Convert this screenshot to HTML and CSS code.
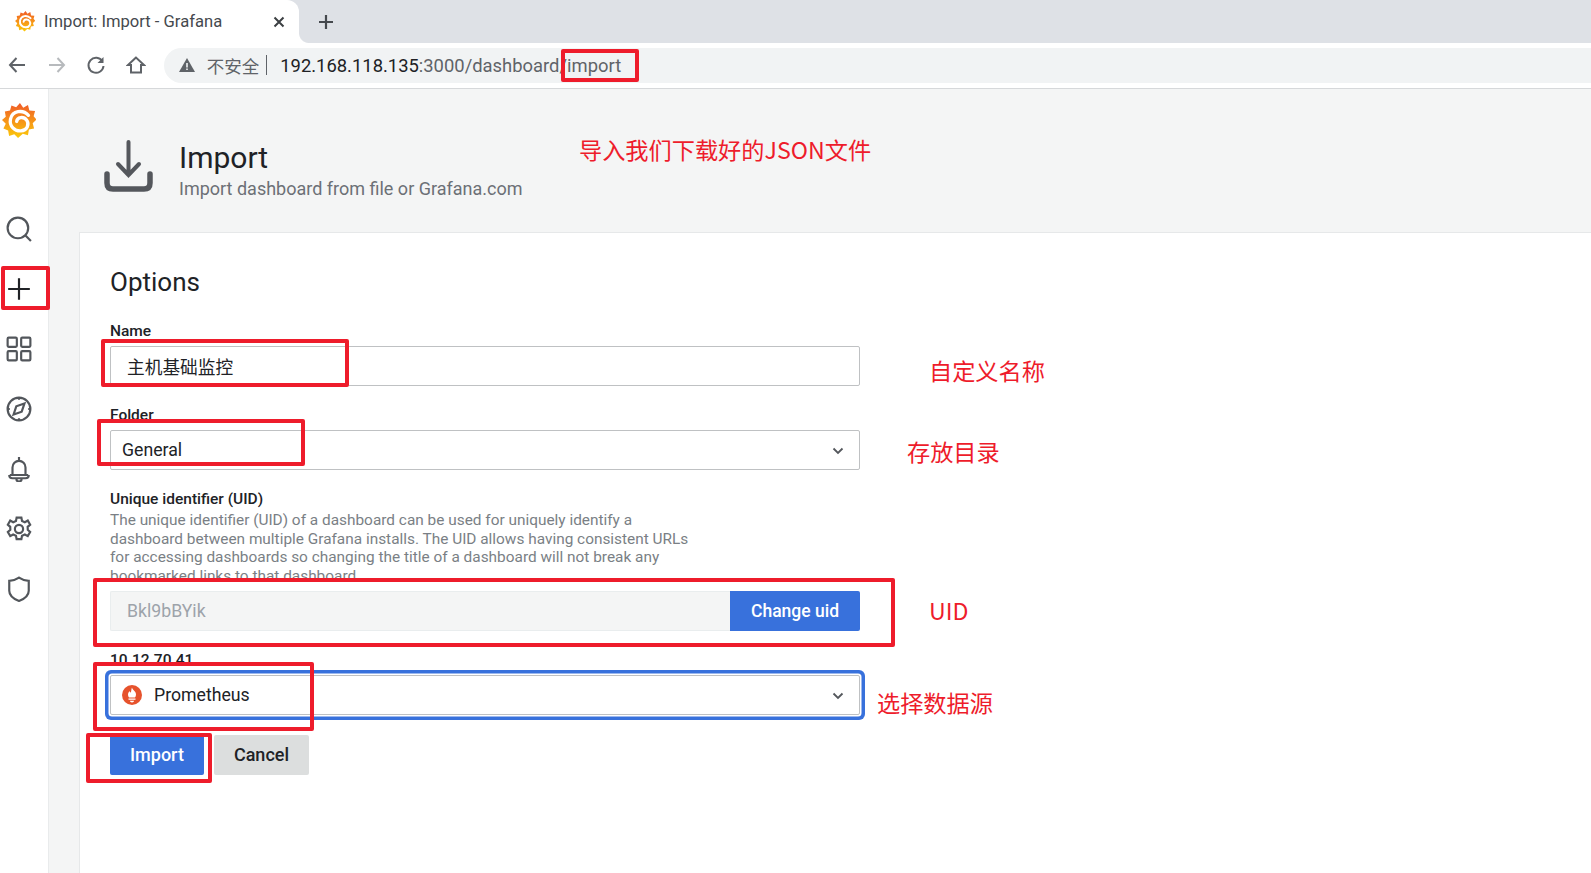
FILE: index.html
```html
<!DOCTYPE html>
<html lang="zh-CN">
<head>
    <meta charset="UTF-8">
    <meta name="viewport" content="width=device-width, initial-scale=1.0">
    <title>Import: Import - Grafana</title>
    <link rel="stylesheet" href="styles.css">
</head>
<body>
    <svg class="defs" width="0" height="0">
        <defs>
            <linearGradient id="grafana-fill" x1="0" y1="0" x2="0" y2="1">
                <stop offset="0" stop-color="#f05a28"/>
                <stop offset="1" stop-color="#fbca0a"/>
            </linearGradient>
            <symbol id="grafana-logo" viewBox="0 0 36 38">
                <path fill="url(#grafana-fill)" d="M19 0l3.500 5 5-3 1.500 6 6 .5-1.500 5.500 3 3.500-4 4 1.500 5.500-5.500 1-1 6-5.500-1.500L17 37l-4-4-5.500 2-1-6-5-2 2.500-5L0 18l4-3.500L3 9l5.500-1L10 2.500l5 2z"/>
                <path fill="none" stroke="#fff" stroke-width="3.500" stroke-linecap="round" d="M28 13C22 6.500 11 8 9 17c-1.500 7.500 4.500 13 11 12.500 6.500-.5 9.500-7 6-11.500-3-4-10-3.500-10.500 1.500"/>
            </symbol>
        </defs>
    </svg>

    <div class="tabstrip">
        <div class="tab">
            <svg class="favicon"><use href="#grafana-logo"/></svg>
            <span class="tab-title">Import: Import - Grafana</span>
            <svg class="tab-close" viewBox="0 0 12 12"><path d="M1.500 1.500l9 9M10.500 1.500l-9 9"/></svg>
        </div>
        <svg class="tab-new" viewBox="0 0 16 16"><path d="M8 1v14M1 8h14"/></svg>
    </div>

    <div class="toolbar">
        <svg class="nav-icon" viewBox="0 0 20 20"><path d="M18 10H3M9.500 3L3 10l6.500 7"/></svg>
        <svg class="nav-icon nav-off" viewBox="0 0 20 20"><path d="M2 10h15M10.500 3l6.500 7-6.500 7"/></svg>
        <svg class="nav-icon" viewBox="0 0 20 20"><path d="M16.500 6.500A7.500 7.500 0 1 0 17.500 11"/><path class="solid" d="M17.500 2v6h-6z"/></svg>
        <svg class="nav-icon" viewBox="0 0 20 20"><path d="M10 2.500L2 10h3v7.500h10V10h3z"/></svg>
        <div class="omnibox">
            <svg class="warn" viewBox="0 0 16 14"><path d="M8 0l8 14H0z"/><path class="warn-mark" d="M7.200 5h1.600v4.500H7.200zM7.200 10.500h1.600V12H7.200z"/></svg>
            <span class="insecure">不安全</span>
            <span class="omni-sep"></span>
            <span class="url"><span class="url-host">192.168.118.135</span>:3000/dashboard/import</span>
        </div>
    </div>

    <div class="app">
        <nav class="sidebar">
            <svg class="side-logo"><use href="#grafana-logo"/></svg>
            <div class="side-item"><svg viewBox="0 0 24 24"><circle cx="11" cy="11" r="9.500"/><path d="M18 18l5 5"/></svg></div>
            <div class="side-item side-active"><svg viewBox="0 0 24 24"><path d="M12 2v20M2 12h20"/></svg></div>
            <div class="side-item"><svg viewBox="0 0 24 24"><rect x="1.500" y="1.500" width="8.500" height="8.500" rx="1"/><rect x="14" y="1.500" width="8.500" height="8.500" rx="1"/><rect x="1.500" y="14" width="8.500" height="8.500" rx="1"/><rect x="14" y="14" width="8.500" height="8.500" rx="1"/></svg></div>
            <div class="side-item"><svg viewBox="0 0 24 24"><circle cx="12" cy="12" r="10.500"/><path d="M17 7l-2.500 7.500L7 17l2.500-7.500z"/><path d="M12 1.500v2M12 20.500v2M1.500 12h2M20.500 12h2"/></svg></div>
            <div class="side-item"><svg viewBox="0 0 24 24"><path d="M12 1v3M6 17v-6.500a6 6 0 0 1 12 0V17"/><path d="M3.500 17.500h17M3 17.500q0 3 3 3h12q3 0 3-3M9.500 20.500q0 3 2.500 3t2.500-3"/></svg></div>
            <div class="side-item"><svg viewBox="0 0 24 24"><circle cx="12" cy="12" r="3.800"/><path d="M9.800 1.500h4.400l.6 3 2.600 1.200 2.700-1.500 2.200 3.800-2.300 2 .1 2.800 2.200 2-2.200 3.800-2.700-1.500-2.600 1.200-.6 3H9.800l-.6-3-2.600-1.200-2.700 1.500-2.200-3.800 2.300-2-.1-2.800-2.200-2 2.200-3.800 2.700 1.500 2.600-1.200z"/></svg></div>
            <div class="side-item"><svg viewBox="0 0 24 24"><path d="M12 1.500q4.500 3 9 3v9q0 6-9 9.500-9-3.500-9-9.500v-9q4.500 0 9-3z"/></svg></div>
        </nav>

        <main class="content">
            <header class="page-header">
                <svg class="page-icon" viewBox="0 0 52 54"><path class="page-arrow" d="M25.500 3v33M15 25l10.500 11L36 25"/><path class="page-tray" d="M4 35v9q0 6 6 6h31q6 0 6-6v-9"/></svg>
                <div class="page-info">
                    <h1>Import</h1>
                    <p>Import dashboard from file or Grafana.com</p>
                </div>
            </header>

            <section class="card">
                <h2>Options</h2>

                <div class="field">
                    <div class="label">Name</div>
                    <div class="control control-name">主机基础监控</div>
                </div>

                <div class="field">
                    <div class="label">Folder</div>
                    <div class="control control-folder">General
                        <svg class="chevron" viewBox="0 0 12 8"><path d="M1.500 1.500L6 6l4.500-4.500"/></svg>
                    </div>
                </div>

                <div class="field">
                    <div class="label">Unique identifier (UID)</div>
                    <div class="description">The unique identifier (UID) of a dashboard can be used for uniquely identify a dashboard between multiple Grafana installs. The UID allows having consistent URLs for accessing dashboards so changing the title of a dashboard will not break any bookmarked links to that dashboard.</div>
                    <div class="uid-row">
                        <div class="control control-uid">Bkl9bBYik</div>
                        <button class="btn btn-primary btn-uid">Change uid</button>
                    </div>
                </div>

                <div class="field">
                    <div class="label">10.12.70.41</div>
                    <div class="control control-source">
                        <svg class="prom-icon" viewBox="0 0 20 20"><circle cx="10" cy="10" r="10" fill="#e6522c"/><path fill="#fff" d="M10 2.500c.5 2.500 4 3.500 4 7 0 1.200-.4 2.200-1 3H7c-.6-.8-1-1.800-1-3 0-1.500 1-2.500 1.500-3.500.3 1 .7 1.500 1.200 1.500C9.500 6.500 9 4.500 10 2.500zM6.500 13.500h7v1.300h-7zM8 15.800h4c0 1-.9 1.700-2 1.700s-2-.7-2-1.700z"/></svg>
                        Prometheus
                        <svg class="chevron" viewBox="0 0 12 8"><path d="M1.500 1.500L6 6l4.500-4.500"/></svg>
                    </div>
                </div>

                <div class="actions">
                    <button class="btn btn-primary">Import</button>
                    <button class="btn btn-secondary">Cancel</button>
                </div>
            </section>
        </main>
    </div>

    <div class="mark mark-url"></div>
    <div class="mark mark-plus"></div>
    <div class="mark mark-name"></div>
    <div class="mark mark-folder"></div>
    <div class="mark mark-uid"></div>
    <div class="mark mark-source"></div>
    <div class="mark mark-import"></div>

    <div class="note note-json">导入我们下载好的JSON文件</div>
    <div class="note note-name">自定义名称</div>
    <div class="note note-folder">存放目录</div>
    <div class="note note-uid">UID</div>
    <div class="note note-source">选择数据源</div>
</body>
</html>
```

FILE: styles.css
```css
* {
    box-sizing: border-box;
}
html, body {
    height: 100%;
}
body {
    position: relative;
    margin: 0;
    overflow: hidden;
    background-color: #fff;
    color: #202226;
    font-family: 'Roboto', 'Noto Sans CJK SC', sans-serif;
}
.defs {
    position: absolute;
}

/* browser chrome */
.tabstrip {
    display: flex;
    align-items: center;
    height: 43px;
    background-color: #dee1e6;
}
.tab {
    position: relative;
    display: flex;
    align-items: center;
    width: 299px;
    height: 100%;
    padding: 0 14px 0 15px;
    background-color: #fff;
    border-top-right-radius: 12px;
}
.tab::after {
    content: '';
    position: absolute;
    right: -10px;
    bottom: 0;
    width: 10px;
    height: 10px;
    background: radial-gradient(circle at 100% 0, #dee1e6 9.5px, #fff 10.5px);
}
.favicon {
    width: 20px;
    height: 21px;
    flex: none;
}
.tab-title {
    flex: 1;
    margin-left: 9px;
    font-size: 16.600px;
    color: #45494e;
}
.tab-close {
    width: 12px;
    height: 12px;
    fill: none;
    stroke: #3c4043;
    stroke-width: 2;
}
.tab-new {
    width: 16px;
    height: 16px;
    margin-left: 19px;
    fill: none;
    stroke: #45494e;
    stroke-width: 2.200;
}
.toolbar {
    display: flex;
    align-items: center;
    height: 46px;
    padding: 0 0 1px 7px;
    background-color: #fff;
    border-bottom: 1px solid #d6d8da;
}
.nav-icon {
    width: 20px;
    height: 20px;
    margin-right: 19.700px;
    fill: none;
    stroke: #5f6368;
    stroke-width: 2;
}
.nav-icon .solid {
    fill: #5f6368;
    stroke: none;
}
.nav-off {
    stroke: #b7babd;
}
.omnibox {
    display: flex;
    align-items: center;
    flex: 1;
    height: 35px;
    margin-left: -2px;
    padding-left: 15px;
    background-color: #f1f3f4;
    border-radius: 18px 0 0 18px;
}
.warn {
    width: 16px;
    height: 14px;
    fill: #5f6368;
}
.warn-mark {
    fill: #f1f3f4;
}
.insecure {
    margin-left: 12px;
    font-size: 17.500px;
    color: #5f6368;
}
.omni-sep {
    width: 1px;
    height: 20px;
    margin: 0 13px 0 7px;
    background-color: #5f6368;
}
.url {
    font-size: 18.400px;
    color: #5f6368;
}
.url-host {
    color: #202124;
}

/* grafana shell */
.app {
    display: flex;
    height: calc(100% - 89px);
}
.sidebar {
    flex: none;
    width: 49px;
    padding-right: 10px;
    background-color: #fff;
    border-right: 1px solid #e9ebec;
}
.side-logo {
    display: block;
    width: 34px;
    height: 36px;
    margin: 14px auto 60px;
}
.side-item {
    display: flex;
    align-items: center;
    justify-content: center;
    height: 60px;
}
.side-item svg {
    width: 26px;
    height: 26px;
    fill: none;
    stroke: #52565b;
    stroke-width: 2;
}
.side-active svg {
    stroke: #202226;
}
.content {
    display: flex;
    flex-direction: column;
    flex: 1;
    min-width: 0;
    background-color: #f4f5f5;
}
.page-header {
    display: flex;
    flex: none;
    align-items: center;
    height: 143px;
    padding-left: 54px;
}
.page-icon {
    width: 52px;
    height: 54px;
    margin-top: 10px;
    fill: none;
    stroke: #54575c;
    stroke-linecap: round;
}
.page-arrow {
    stroke-width: 4;
}
.page-tray {
    stroke-width: 5.500;
}
.page-info {
    margin-left: 24px;
    padding-top: 18px;
}
.page-info h1 {
    margin: 0 0 2px;
    font-size: 30px;
    font-weight: 400;
    line-height: 36px;
}
.page-info p {
    margin: 0;
    font-size: 18px;
    line-height: 22px;
    color: #6c7076;
}
.card {
    flex: 1;
    margin-left: 30px;
    padding: 0 0 0 30px;
    background-color: #fff;
    border: 1px solid #e6e8e9;
    border-width: 1px 0 0 1px;
}
.card h2 {
    margin: 0;
    padding-top: 30px;
    height: 89px;
    font-size: 26px;
    font-weight: 400;
    line-height: 38px;
}
.field {
    width: 750px;
    margin-bottom: 20px;
}
.label {
    padding-top: 1px;
    margin-bottom: 7px;
    font-size: 15.500px;
    font-weight: 500;
    line-height: 16px;
}
.control {
    position: relative;
    display: flex;
    align-items: center;
    height: 40px;
    background-color: #fff;
    border: 1px solid #bfc1c3;
    border-radius: 2px;
    font-size: 17.700px;
}
.control-name {
    padding-left: 16px;
}
.control-folder {
    padding-left: 11px;
}
.control-source {
    padding-left: 11px;
    box-shadow: 0 0 0 1.500px #fff, 0 0 0 5px #3871dc;
    border-radius: 2px;
}
.chevron {
    position: absolute;
    right: 15px;
    top: 16px;
    width: 12px;
    height: 8px;
    fill: none;
    stroke: #54575c;
    stroke-width: 1.800;
}
.prom-icon {
    width: 20px;
    height: 20px;
    margin-right: 12px;
}
.description {
    width: 585px;
    margin: -3px 0 6px;
    font-size: 15.400px;
    line-height: 18.500px;
    color: #7a7f85;
}
.uid-row {
    display: flex;
}
.control-uid {
    flex: 1;
    padding-left: 16px;
    background-color: #f4f5f5;
    border-color: #e9edee;
    border-right: 0;
    border-radius: 2px 0 0 2px;
    color: #9da3aa;
}
.btn {
    height: 40px;
    padding: 0 20px 1px;
    border: 0;
    border-radius: 2px;
    font-family: inherit;
    font-size: 18px;
    font-weight: 500;
}
.btn-primary {
    background-color: #3871dc;
    color: #fff;
}
.btn-secondary {
    background-color: #dcdede;
    color: #202226;
}
.btn-uid {
    width: 130px;
    border-radius: 0 2px 2px 0;
    font-size: 17.500px;
}
.actions {
    display: flex;
    gap: 10px;
}

/* screenshot annotations */
.mark {
    position: absolute;
    border: 4px solid #ee1c2b;
    border-radius: 2px;
}
.mark-url {
    left: 561px;
    top: 49px;
    width: 78px;
    height: 33px;
}
.mark-plus {
    left: 1px;
    top: 266px;
    width: 49px;
    height: 44px;
}
.mark-name {
    left: 101px;
    top: 339px;
    width: 248px;
    height: 48px;
}
.mark-folder {
    left: 97px;
    top: 419px;
    width: 208px;
    height: 47px;
}
.mark-uid {
    left: 93px;
    top: 578px;
    width: 802px;
    height: 69px;
}
.mark-source {
    left: 93px;
    top: 662px;
    width: 221px;
    height: 69px;
}
.mark-import {
    left: 86px;
    top: 733px;
    width: 126px;
    height: 50px;
}
.note {
    position: absolute;
    font-family: 'Noto Sans CJK SC', sans-serif;
    font-size: 23.200px;
    line-height: 30px;
    color: #ee1c2b;
    white-space: nowrap;
}
.note-json {
    left: 579px;
    top: 134px;
}
.note-name {
    left: 929px;
    top: 355px;
}
.note-folder {
    left: 907px;
    top: 436px;
}
.note-uid {
    left: 929px;
    top: 595px;
}
.note-source {
    left: 877px;
    top: 687px;
}
```
